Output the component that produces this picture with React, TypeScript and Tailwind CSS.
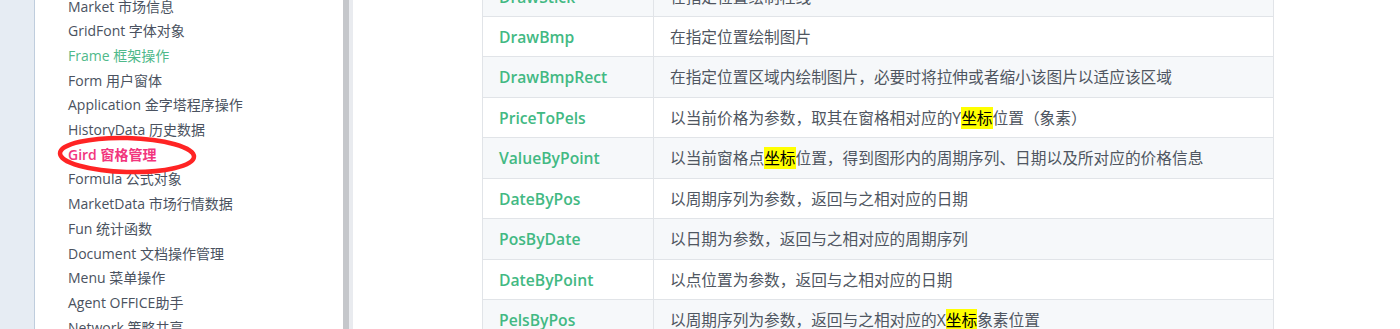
import React from "react";

type Row = { name: string; desc: React.ReactNode };

const Hl: React.FC<{ children: React.ReactNode }> = ({ children }) => (
    <span className="bg-[#ffff00] text-black">{children}</span>
);

const navItems: { label: string; tone?: "green" | "pink" }[] = [
    { label: "Market 市场信息" },
    { label: "GridFont 字体对象" },
    { label: "Frame 框架操作", tone: "green" },
    { label: "Form 用户窗体" },
    { label: "Application 金字塔程序操作" },
    { label: "HistoryData 历史数据" },
    { label: "Gird 窗格管理", tone: "pink" },
    { label: "Formula 公式对象" },
    { label: "MarketData 市场行情数据" },
    { label: "Fun 统计函数" },
    { label: "Document 文档操作管理" },
    { label: "Menu 菜单操作" },
    { label: "Agent OFFICE助手" },
    { label: "Network 策略共享" },
];

const rows: Row[] = [
    { name: "DrawStick", desc: "在指定位置绘制柱线" },
    { name: "DrawBmp", desc: "在指定位置绘制图片" },
    { name: "DrawBmpRect", desc: "在指定位置区域内绘制图片，必要时将拉伸或者缩小该图片以适应该区域" },
    { name: "PriceToPels", desc: <>以当前价格为参数，取其在窗格相对应的Y<Hl>坐标</Hl>位置（象素）</> },
    { name: "ValueByPoint", desc: <>以当前窗格点<Hl>坐标</Hl>位置，得到图形内的周期序列、日期以及所对应的价格信息</> },
    { name: "DateByPos", desc: "以周期序列为参数，返回与之相对应的日期" },
    { name: "PosByDate", desc: "以日期为参数，返回与之相对应的周期序列" },
    { name: "DateByPoint", desc: "以点位置为参数，返回与之相对应的日期" },
    { name: "PelsByPos", desc: <>以周期序列为参数，返回与之相对应的X<Hl>坐标</Hl>象素位置</> },
];

const Sidebar: React.FC = () => (
    <aside className="relative flex h-full shrink-0">
        <div className="w-[35px] bg-[#e6ecf3] border-r border-[#bfcddd]" />
        <div className="relative w-[308px] bg-white">
            <ul className="-mt-[5.5px] pl-[33px] text-[14px] leading-[24.7px] font-['Open_Sans','Noto_Sans_CJK_SC',sans-serif]">
                {navItems.map((item) => (
                    <li
                        key={item.label}
                        className={
                            item.tone === "green"
                                ? "text-[#4fb98a]"
                                : item.tone === "pink"
                                ? "text-[#f2357d] font-semibold"
                                : "text-[#4a5260]"
                        }
                    >
                        {item.label}
                    </li>
                ))}
            </ul>
            {/* hand drawn mark around the current item */}
            <svg className="absolute left-[2px] top-[134px]" width="180" height="44" viewBox="0 0 180 44">
                <ellipse cx="90" cy="21" rx="67" ry="17" fill="none" stroke="#ff2424" strokeWidth="4.5" transform="rotate(1.5 90 21)" />
            </svg>
        </div>
        {/* scrollbar */}
        <div className="w-[6px] bg-[#c5c7cb]" />
        <div className="w-[4px] bg-[#e9ebef]" />
    </aside>
);

const FunctionTable: React.FC = () => (
    <div className="ml-[129px] -mt-[24.4px] w-[792px] border-x border-[#e1e4e8] font-['Open_Sans','Noto_Sans_CJK_SC',sans-serif] text-[15.7px]">
        {rows.map((r, i) => (
            <div
                key={r.name}
                className={`flex h-[40.43px] items-center border-t border-[#e1e4e8] ${i % 2 === 0 ? "bg-[#f6f8fa]" : "bg-white"}`}
            >
                <div className="flex h-full w-[171px] shrink-0 items-center border-r border-[#e1e4e8] pl-[16px] pt-[2px] font-semibold text-[#42b983]">
                    {r.name}
                </div>
                <div className="pl-[16px] pt-[2px] text-[#4f5661] whitespace-nowrap">{r.desc}</div>
            </div>
        ))}
    </div>
);

const App: React.FC = () => {
    return (
        <div className="flex h-[329px] w-[1400px] overflow-hidden bg-white">
            <Sidebar />
            <main className="flex-1 overflow-hidden">
                <FunctionTable />
            </main>
        </div>
    );
};

export default App;
